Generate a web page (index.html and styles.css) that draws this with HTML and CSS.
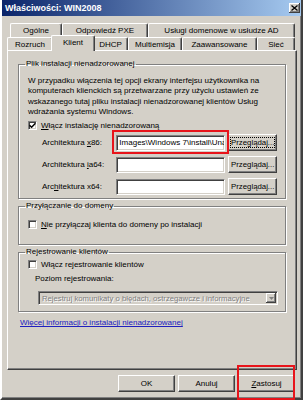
FILE: index.html
```html
<!DOCTYPE html>
<html lang="pl">
<head>
    <meta charset="UTF-8">
    <meta name="viewport" content="width=device-width, initial-scale=1.0">
    <title>Właściwości: WIN2008</title>
    <link rel="stylesheet" href="styles.css">
</head>
<body>

    <div class="window">

        <!-- Title bar -->
        <div class="titlebar">
            <span class="title">Właściwości: WIN2008</span>
            <span class="close-btn">
                <svg width="7" height="6" viewBox="0 0 7 6"><path d="M0.5 0.5 L6.5 5.5 M6.5 0.5 L0.5 5.5" stroke="#000" stroke-width="1.3"/></svg>
            </span>
        </div>

        <!-- Tabs -->
        <div class="tabs">
            <div class="tab-row back">
                <div class="tab tab-general">Ogólne</div>
                <div class="tab tab-pxe">Odpowiedź PXE</div>
                <div class="tab tab-ad">Usługi domenowe w usłudze AD</div>
            </div>
            <div class="tab-row front">
                <div class="tab tab-boot">Rozruch</div>
                <div class="tab tab-client active">Klient</div>
                <div class="tab tab-dhcp">DHCP</div>
                <div class="tab tab-multicast">Multiemisja</div>
                <div class="tab tab-advanced">Zaawansowane</div>
                <div class="tab tab-network">Sieć</div>
            </div>
        </div>

        <!-- Tab page -->
        <div class="panel">
            <fieldset class="group group-unattend">
                <legend>Plik instalacji nienadzorowanej</legend>
                <p class="desc">W przypadku włączenia tej opcji ekrany interfejsu użytkownika na<br>komputerach klienckich są przetwarzane przy użyciu ustawień ze<br>wskazanego tutaj pliku instalacji nienadzorowanej klientów Usług<br>wdrażania systemu Windows.</p>
                <div class="check">
                    <span class="box">
                        <svg width="7" height="7" viewBox="0 0 7 7"><path d="M0.5 3.2 L2.6 5.3 L6.5 1.2" fill="none" stroke="#000" stroke-width="1.5"/></svg>
                    </span>
                    <span><u>W</u>łącz instalację nienadzorowaną</span>
                </div>
                <div class="arch-row">
                    <span class="arch-label">Architektura <u>x</u>86:</span>
                    <span class="field">Images\Windows 7\install\Unattend.xml</span>
                    <span class="btn btn-browse"><span class="focus">Przeglądaj...</span></span>
                </div>
                <div class="arch-row">
                    <span class="arch-label">Architektura <u>i</u>a64:</span>
                    <span class="field"></span>
                    <span class="btn btn-browse">Przeglądaj...</span>
                </div>
                <div class="arch-row">
                    <span class="arch-label">Arc<u>h</u>itektura x64:</span>
                    <span class="field"></span>
                    <span class="btn btn-browse">Przeglądaj...</span>
                </div>
            </fieldset>

            <fieldset class="group group-domain">
                <legend>Przyłączanie do domeny</legend>
                <div class="check">
                    <span class="box"></span>
                    <span><u>N</u>ie przyłączaj klienta do domeny po instalacji</span>
                </div>
            </fieldset>

            <fieldset class="group group-logging">
                <legend>Rejestrowanie klientów</legend>
                <div class="check">
                    <span class="box"></span>
                    <span>Włącz rejestrowanie klientów</span>
                </div>
                <div class="level-label">Poziom rejestrowania:</div>
                <div class="select">
                    <span class="select-text">Rejestruj komunikaty o błędach, ostrzegawcze i informacyjne</span>
                    <span class="select-arrow">
                        <svg width="5" height="3" viewBox="0 0 5 3"><path d="M0 0 H5 L2.5 3 Z" fill="#808080"/></svg>
                    </span>
                </div>
            </fieldset>

            <a href="#" class="more-link">Więcej informacji o instalacji nienadzorowanej</a>
        </div>

        <!-- Dialog buttons -->
        <div class="actions">
            <span class="btn btn-dialog">OK</span>
            <span class="btn btn-dialog">Anuluj</span>
            <span class="btn btn-dialog"><u>Z</u>astosuj</span>
        </div>

        <!-- Red annotation frames -->
        <div class="mark mark-path"></div>
        <div class="mark mark-apply"></div>
    </div>

</body>
</html>
```

FILE: styles.css
```css
body {
    margin: 0;
    font-family: "Liberation Sans", Arial, sans-serif;
    font-size: 8px;
    color: #000;
    background-color: #d4d0c8;
}

/* Window frame */
.window {
    position: relative;
    width: 303px;
    height: 400px;
    box-sizing: border-box;
    border: 2px solid;
    border-top: 0;
    border-color: #fff #404040 #404040 #fff;
    box-shadow: inset -1px -1px 0 #808080;
    background-color: #d4d0c8;
}

.titlebar {
    display: flex;
    justify-content: space-between;
    align-items: center;
    height: 16px;
    padding: 0 1px 0 3px;
    background: linear-gradient(to right, #0a246a, #a6caf0);
    color: white;
}

.title {
    font-weight: bold;
    font-size: 9px;
}

.close-btn {
    display: flex;
    justify-content: center;
    align-items: center;
    width: 11px;
    height: 10px;
    background-color: #d4d0c8;
    box-shadow: inset -1px -1px 0 #404040, inset 1px 1px 0 #fff, inset -2px -2px 0 #808080;
}

/* Tabs */
.tabs {
    padding-top: 7px;
}

.tab-row {
    display: flex;
}

.tab-row.back {
    height: 14px;
    margin-left: 8px;
}

.tab-row.front {
    height: 13px;
    margin-left: 5px;
}

.tab {
    flex: none;
    box-sizing: border-box;
    text-align: center;
    font-size: 8px;
    line-height: 13px;
    white-space: nowrap;
    border-top: 1px solid #fff;
    border-left: 1px solid #fff;
    border-right: 1px solid #404040;
    border-radius: 2px 2px 0 0;
    box-shadow: inset -1px 0 0 #808080;
    background-color: #d4d0c8;
}

.tab-general { width: 52px; }
.tab-pxe { width: 86px; }
.tab-ad { width: 147px; }

.tab-boot { width: 46px; }
.tab-client { width: 40px; }
.tab-dhcp { width: 35px; }
.tab-multicast { width: 54px; }
.tab-advanced { width: 75px; }
.tab-network { width: 38px; }

.tab.active {
    position: relative;
    z-index: 1;
    width: 44px;
    margin: -2px -2px -1px;
    line-height: 14px;
}

/* Tab page */
.panel {
    display: flex;
    flex-direction: column;
    align-items: flex-start;
    height: 320px;
    box-sizing: border-box;
    margin: 0 4px 0 5px;
    padding: 8px 10px 0;
    border: 1px solid;
    border-color: #fff #404040 #404040 #fff;
    box-shadow: inset -1px -1px 0 #808080;
}

.group {
    align-self: stretch;
    margin: 0;
    padding: 0 8px 0 9px;
    min-inline-size: 0;
    border: 1px solid #808080;
    box-shadow: 1px 1px 0 #fff, inset 1px 1px 0 #fff;
}

.group legend {
    margin-left: -3px;
    padding: 0 1px;
    line-height: 10px;
}

.group + .group {
    margin-top: 2px;
}

.group-unattend {
    padding-bottom: 3px;
}

.group-domain {
    padding-top: 8px;
    padding-bottom: 15px;
}

.group-logging {
    padding-top: 2px;
    padding-bottom: 6px;
}

.desc {
    margin: 7px 0 0;
    line-height: 10.3px;
}

.check {
    display: flex;
    align-items: center;
    gap: 4px;
    height: 10px;
}

.group-unattend .check {
    margin-top: 3px;
}

.box {
    display: flex;
    justify-content: center;
    align-items: center;
    width: 9px;
    height: 9px;
    box-sizing: border-box;
    background-color: white;
    border: 1px solid;
    border-color: #808080 #fff #fff #808080;
    box-shadow: inset 1px 1px 0 #404040, inset -1px -1px 0 #d4d0c8;
}

.arch-row {
    display: flex;
    align-items: center;
    height: 17px;
    margin-top: 5px;
    padding-left: 14px;
}

.group-unattend .check + .arch-row {
    margin-top: 4px;
}

.arch-label {
    width: 75px;
}

.field {
    width: 110px;
    height: 16px;
    box-sizing: border-box;
    padding: 0 2px;
    overflow: hidden;
    white-space: nowrap;
    line-height: 14px;
    background-color: white;
    border: 1px solid;
    border-color: #808080 #fff #fff #808080;
    box-shadow: inset 1px 1px 0 #404040, inset -1px -1px 0 #d4d0c8;
}

.btn {
    display: flex;
    justify-content: center;
    align-items: center;
    box-sizing: border-box;
    white-space: nowrap;
    background-color: #d4d0c8;
    border: 1px solid;
    border-color: #fff #404040 #404040 #fff;
    box-shadow: inset -1px -1px 0 #808080;
}

.btn-browse {
    width: 49px;
    height: 17px;
    margin-left: 3px;
    font-size: 7.8px;
}

.focus {
    outline: 1px dotted #000;
    outline-offset: 0;
}

.level-label {
    margin: 5px 0 0 7px;
    line-height: 10px;
}

.select {
    display: flex;
    align-items: center;
    justify-content: space-between;
    width: 240px;
    height: 14px;
    box-sizing: border-box;
    margin: 7px 0 0 10px;
    padding: 0 1px 0 3px;
    border: 1px solid;
    border-color: #808080 #fff #fff #808080;
    box-shadow: inset 1px 1px 0 #404040, inset -1px -1px 0 #d4d0c8;
    background-color: #d4d0c8;
}

.select-text {
    overflow: hidden;
    white-space: nowrap;
    font-size: 7.7px;
    color: #808080;
    text-shadow: 1px 1px 0 #fff;
}

.select-arrow {
    display: flex;
    flex: none;
    justify-content: center;
    align-items: center;
    width: 10px;
    height: 10px;
    box-shadow: inset -1px -1px 0 #404040, inset 1px 1px 0 #fff, inset -2px -2px 0 #808080;
}

.more-link {
    margin: 6px 0 0 2px;
    line-height: 10px;
    color: #2020c0;
}

/* Dialog buttons */
.actions {
    display: flex;
    justify-content: flex-end;
    gap: 3px;
    padding: 5px 6px 0 0;
}

.btn-dialog {
    width: 57px;
    height: 17px;
}

/* Red annotation frames */
.mark {
    position: absolute;
    border: 2px solid #e8141b;
}

.mark-path {
    left: 110px;
    top: 130px;
    width: 113px;
    height: 20px;
}

.mark-apply {
    left: 235px;
    top: 365px;
    width: 54px;
    height: 31px;
}
```
